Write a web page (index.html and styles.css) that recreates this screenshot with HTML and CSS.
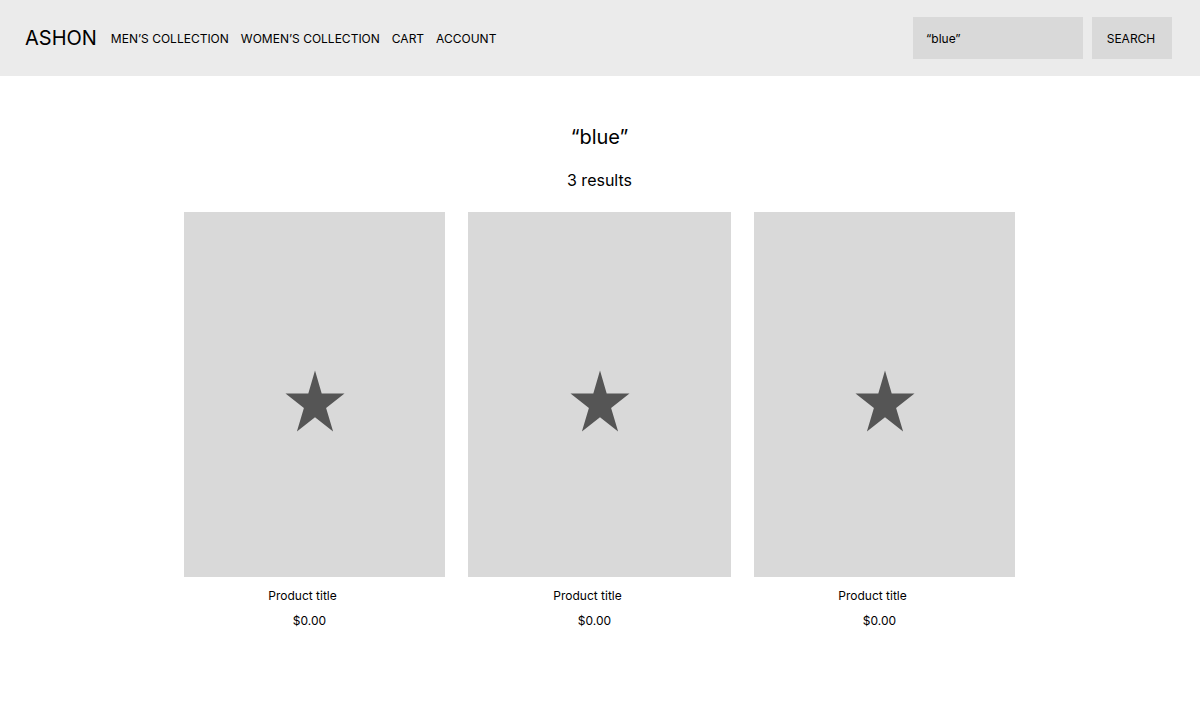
FILE: index.html
```html
<!DOCTYPE html>
<html lang="en">
<head>
<meta charset="utf-8">
<meta name="viewport" content="width=device-width, initial-scale=1">
<title>ASHON – Search results</title>
<link rel="stylesheet" href="styles.css">
</head>
<body>
<header class="header">
  <a class="brand" href="#">ASHON</a>
  <nav class="nav">
    <a class="nav-link" href="#">MEN’S COLLECTION</a>
    <a class="nav-link" href="#">WOMEN’S COLLECTION</a>
    <a class="nav-link" href="#">CART</a>
    <a class="nav-link" href="#">ACCOUNT</a>
  </nav>
  <form class="search" role="search">
    <input class="search-input" type="text" aria-label="Search products" value="“blue”">
    <button class="search-button" type="button">SEARCH</button>
  </form>
</header>
<main class="main">
  <h1 class="title">“blue”</h1>
  <p class="count">3 results</p>
  <ul class="products">
    <li class="product">
      <div class="product-image"><svg class="star" viewBox="0 0 60 62" aria-hidden="true"><path d="M30 0.500L36.700 23.500H59.500L41.100 38L48.100 61.500L30 47.200L11.900 61.500L18.900 38L0.500 23.500H23.300Z"/></svg></div>
      <h2 class="product-title">Product title</h2>
      <p class="product-price">$0.00</p>
    </li>
    <li class="product">
      <div class="product-image"><svg class="star" viewBox="0 0 60 62" aria-hidden="true"><path d="M30 0.500L36.700 23.500H59.500L41.100 38L48.100 61.500L30 47.200L11.900 61.500L18.900 38L0.500 23.500H23.300Z"/></svg></div>
      <h2 class="product-title">Product title</h2>
      <p class="product-price">$0.00</p>
    </li>
    <li class="product">
      <div class="product-image"><svg class="star" viewBox="0 0 60 62" aria-hidden="true"><path d="M30 0.500L36.700 23.500H59.500L41.100 38L48.100 61.500L30 47.200L11.900 61.500L18.900 38L0.500 23.500H23.300Z"/></svg></div>
      <h2 class="product-title">Product title</h2>
      <p class="product-price">$0.00</p>
    </li>
  </ul>
</main>
</body>
</html>
```
FILE: styles.css
```css
* {
  box-sizing: border-box;
}

body {
  margin: 0;
  background: #fff;
  color: #000;
  font-family: Inter, "Liberation Sans", sans-serif;
  font-size: 12px;
  line-height: 16px;
}

h1, h2, p, ul {
  margin: 0;
  padding: 0;
  font-weight: 400;
}

.header {
  display: flex;
  align-items: center;
  padding: 17px 28px 17px 25px;
  background: #ebebeb;
}

.brand {
  margin-right: 14px;
  color: inherit;
  font-size: 20px;
  line-height: 24px;
  text-decoration: none;
}

.nav {
  display: flex;
  gap: 12px;
  padding-top: 2px;
}

.nav-link {
  color: inherit;
  text-decoration: none;
}

.search {
  display: flex;
  gap: 9px;
  margin-left: auto;
}

.search-input,
.search-button {
  height: 42px;
  border: 0;
  border-radius: 0;
  background: #d9d9d9;
  color: inherit;
  font: inherit;
}

.search-input {
  width: 170px;
  padding: 0 13px;
}

.search-button {
  width: 80px;
  padding: 2px 2px 0 0;
}

.main {
  padding: 49px 25px 48px 24px;
  text-align: center;
}

.title {
  font-size: 20px;
  line-height: 24px;
}

.count {
  margin-top: 21px;
  font-size: 16px;
  line-height: 20px;
}

.products {
  display: grid;
  grid-template-columns: 261fr 263fr 261fr;
  gap: 23px;
  max-width: 831px;
  margin: 22px auto 0;
  list-style: none;
}

.product-image {
  display: flex;
  align-items: center;
  justify-content: center;
  height: 365px;
  padding-top: 13px;
  background: #d9d9d9;
}

.star {
  width: 60px;
  height: 62px;
  fill: #555;
}

.product-title {
  margin-top: 11px;
  padding-right: 24px;
  font-size: 12px;
  line-height: 16px;
}

.product-price {
  margin-top: 9px;
  padding-right: 10px;
}
```
